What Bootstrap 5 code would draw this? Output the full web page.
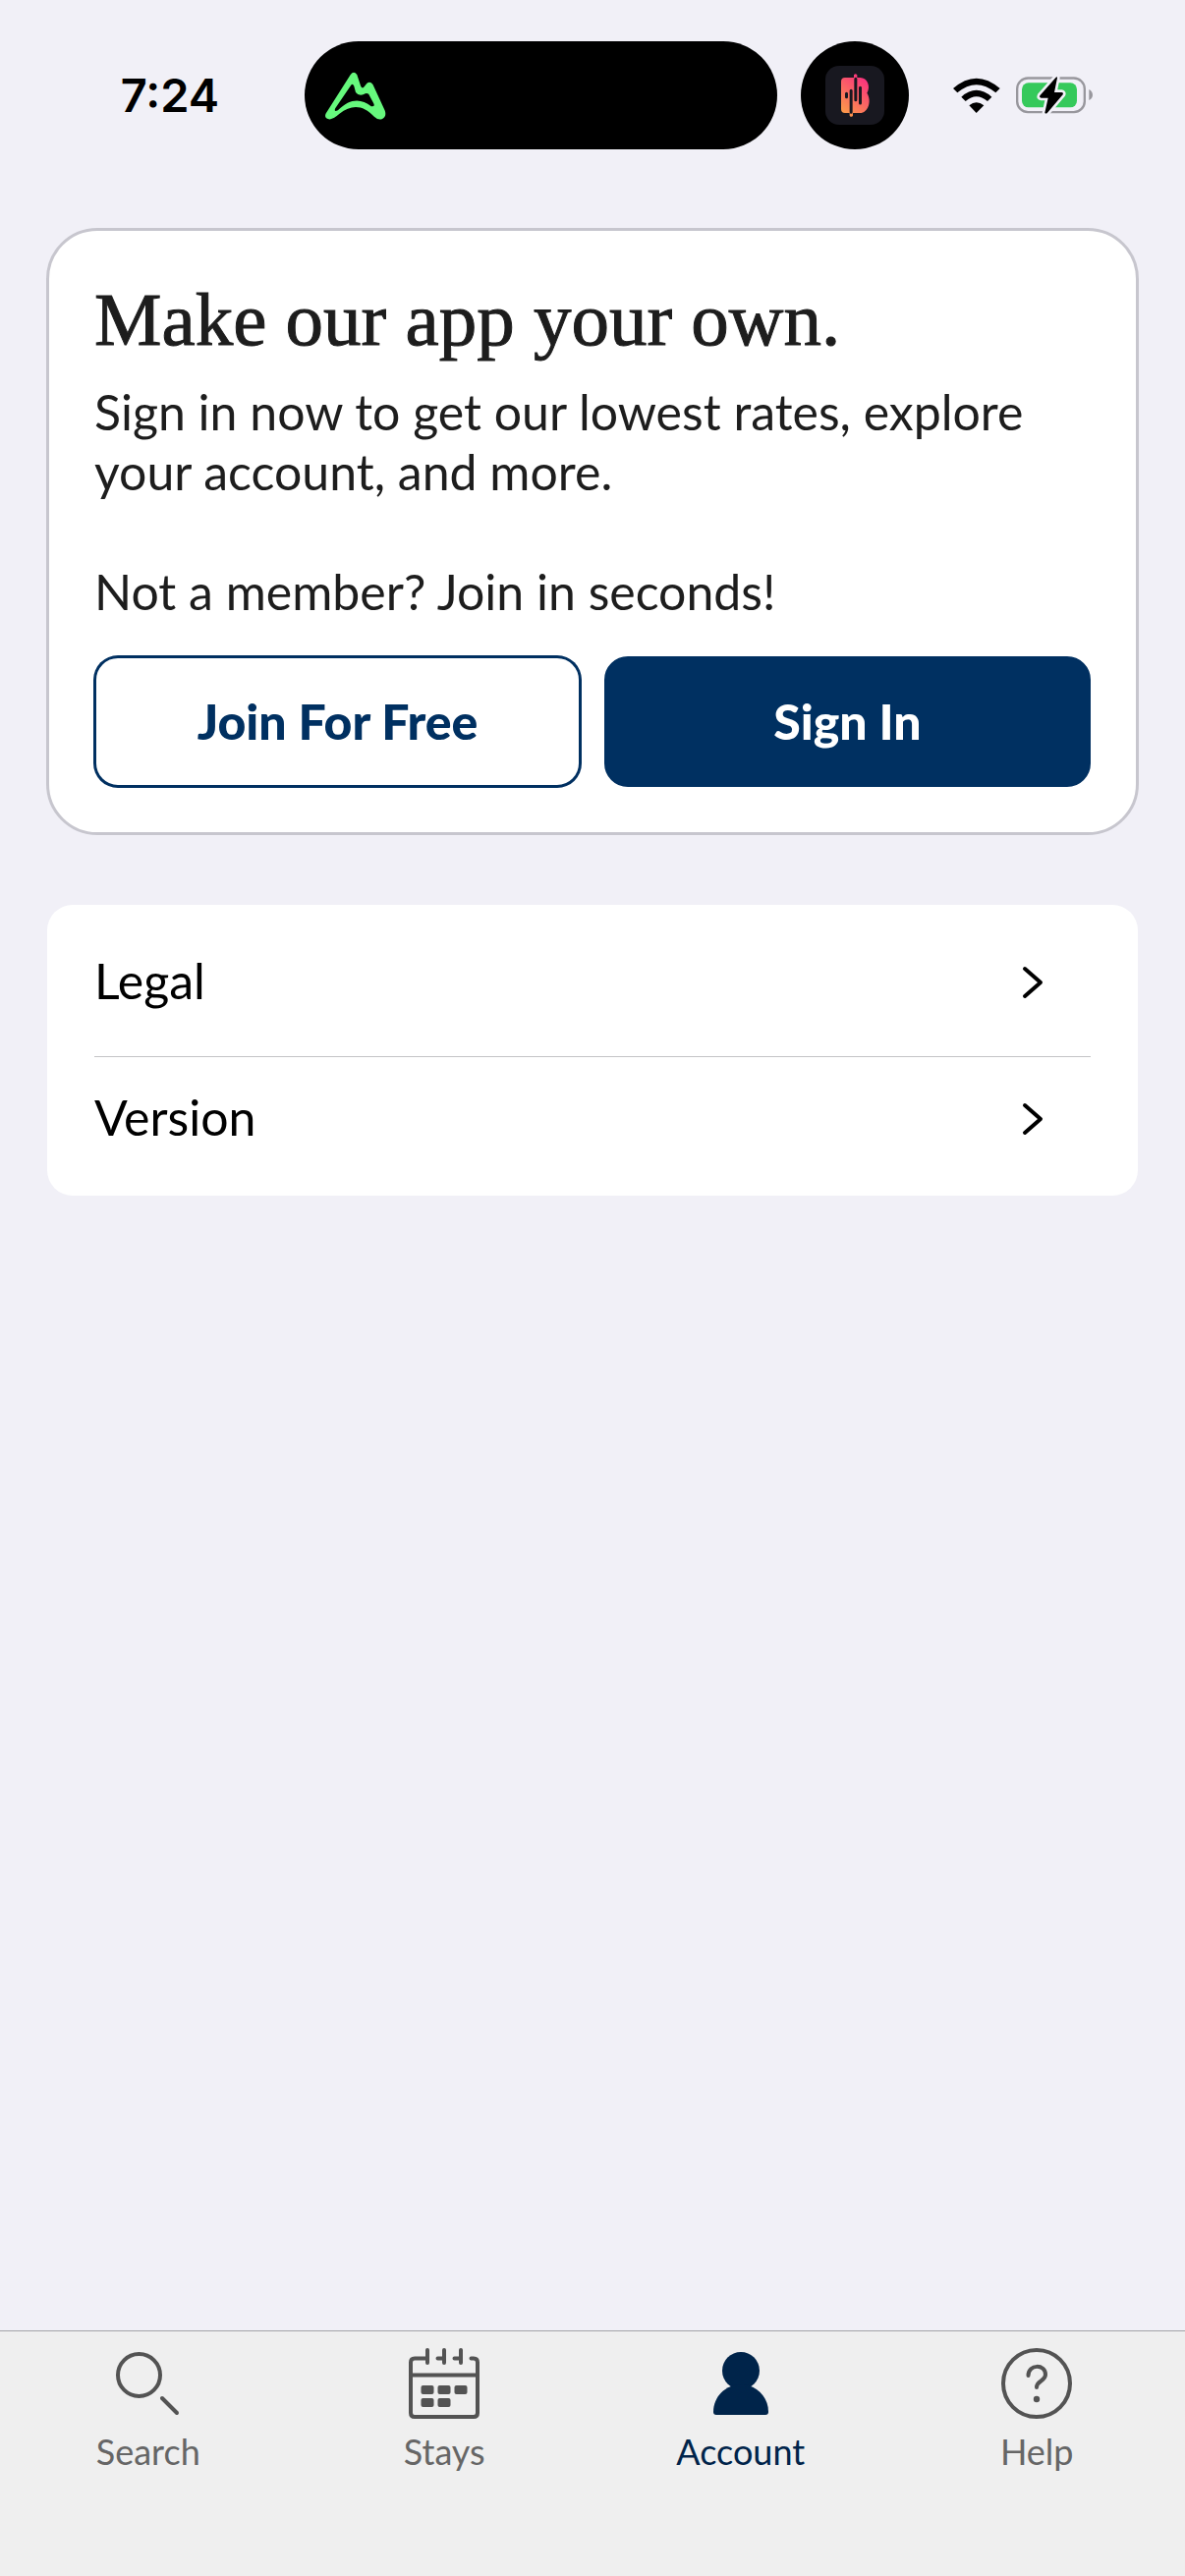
<!DOCTYPE html>
<html lang="en">
<head>
<meta charset="utf-8">
<meta name="viewport" content="width=device-width, initial-scale=1">
<title>Account</title>
<link href="https://cdn.jsdelivr.net/npm/bootstrap@5.3.0/dist/css/bootstrap.min.css" rel="stylesheet">
<style>
:root { --navy: #003061; --ink: #1d1d1d; }
body { background: #f1f0f7; color: var(--ink); font-family: Lato, "Open Sans", sans-serif; font-size: 50px; line-height: 61px; }
svg { display: block; flex: none; }
.status-bar { padding: 42px 94px 0 36px; height: 152px; }
.clock { font: 600 47px/56px Inter, sans-serif; color: #000; }
.island { width: 481px; height: 110px; padding-left: 21px; background: #000; }
.island-dot { width: 110px; height: 110px; background: #000; margin: 0 45px 0 24px; }
.page-main { padding: 80px 47px 0; }
.join-card { border: 3px solid #c7c6ce; border-radius: 52px; padding: 46px; }
.join-card h1 { font: 400 77px/88px "Liberation Serif", serif; -webkit-text-stroke: 1px currentColor; margin: 0 0 20px; }
.join-card .intro { max-width: 980px; margin-bottom: 61px; }
.join-card .prompt { margin-bottom: 35px; }
.action-btn { height: 133px; border-radius: 24px; font-size: 50px; font-weight: 900; border: 2px solid var(--navy); color: var(--navy); }
.action-btn.outlined { background: #fff; box-shadow: 0 0 0 1px var(--navy); }
.action-btn.filled { background: var(--navy); color: #fff; }
.link-card { margin: 71px 1px 0; padding: 4px 48px 15px; border-radius: 26px; }
.link-row { color: #000; height: 126px; padding-right: 48px; }
.link-row:first-child { height: 151px; border-bottom: 1px solid #c4c4c6; }
.link-row span { padding-bottom: 4px; }
.tab-bar { height: 250px; background: #efefef; border-top: 1px solid #a3a3a8; padding-top: 17px; font-size: 36px; line-height: 40px; }
.tab-item { color: #666; gap: 13px; }
.tab-item svg { color: #535353; }
.tab-item.active, .tab-item.active svg { color: #00244a; }
</style>
<script src="https://cdn.jsdelivr.net/npm/bootstrap@5.3.0/dist/js/bootstrap.bundle.min.js"></script>
</head>
<body>
<div class="d-flex flex-column min-vh-100">
  <header class="status-bar d-flex align-items-center">
    <div class="clock flex-fill text-center">7:24</div>
    <div class="island rounded-pill d-flex align-items-center">
      <svg width="62" height="49" viewBox="723 127 188 147" aria-hidden="true">
        <path fill="#66f87d" fill-rule="evenodd" d="M725 255 L801 135 Q811 122 821 135 L833 172 Q838 181 844 172 Q858 149 870 166 L907 246 Q914 267 896 273 Q884 275 874 265 C840 229 805 226 767 256 Q750 271 737 273 Q718 271 725 255 Z M803 167 L754 239 Q749 252 762 245 C800 208 833 208 865 233 Q878 235 872 223 L857 195 Q850 190 842 196 Q826 202 817 190 L812 171 Q808 162 803 167 Z"/>
      </svg>
    </div>
    <div class="island-dot rounded-circle d-flex align-items-center justify-content-center">
      <svg width="60" height="60" viewBox="180 111 180 180" aria-hidden="true">
        <defs><linearGradient id="warm" x1="0.75" y1="0" x2="0.2" y2="1"><stop offset="0" stop-color="#f82d80"/><stop offset="1" stop-color="#fc9c48"/></linearGradient></defs>
        <rect x="180" y="111" width="180" height="180" rx="42" fill="#181820"/>
        <path fill="url(#warm)" d="M240 147H267V139Q272 132 277 139V147H286C309 147 319 175 307 194C323 219 310 255 286 255H264V263Q259 270 254 263V255H240Q228 255 228 243V159Q228 147 240 147Z"/>
        <path d="M244.500 196v10M258.500 187v66M272.500 151v64M286.500 178v47" stroke="#181820" stroke-width="9" stroke-linecap="round"/>
      </svg>
    </div>
    <svg class="me-3" width="48" height="36" viewBox="569 148 144 108" role="img" aria-label="Wi-Fi">
      <path d="M569 181Q640 119 712 181L699 194Q640 145 582 194Z M594 207Q640 166 687 207L674 220Q640 191 607 220Z M618 233Q640 215 663 233L640 256Z"/>
    </svg>
    <svg width="78" height="40" viewBox="762 143 234 120" role="img" aria-label="Battery charging">
      <rect x="765.500" y="150.500" width="206" height="104" rx="33" fill="none" stroke="#98979d" stroke-width="7"/>
      <path d="M985 185Q996 191 996 202Q996 212 985 218Z" fill="#98979d"/>
      <rect x="780" y="165" width="168" height="75" rx="20" fill="#35c95b"/>
      <path d="M884 148L835 204Q832 210 839 211H860L850 256Q853 261 858 256L905 201Q908 195 901 194H879L888 150Q888 145 884 148Z" stroke="#f1f0f7" stroke-width="16" paint-order="stroke"/>
    </svg>
  </header>

  <main class="page-main flex-grow-1">
    <section class="join-card bg-white">
      <h1>Make our app your own.</h1>
      <p class="intro">Sign in now to get our lowest rates, explore your account, and more.</p>
      <p class="prompt">Not a member? Join in seconds!</p>
      <div class="d-flex gap-4">
        <button type="button" class="btn action-btn outlined w-100">Join For Free</button>
        <button type="button" class="btn action-btn filled w-100">Sign In</button>
      </div>
    </section>
    <nav class="link-card bg-white" aria-label="About">
      <a href="#legal" class="link-row d-flex align-items-center justify-content-between text-decoration-none"><span>Legal</span>
        <svg width="22" height="34" viewBox="0 0 22 34" fill="none" stroke="currentColor" stroke-width="4" stroke-linecap="round" stroke-linejoin="round" aria-hidden="true"><path d="M3 3L19 17L3 31"/></svg>
      </a>
      <a href="#version" class="link-row d-flex align-items-center justify-content-between text-decoration-none"><span>Version</span>
        <svg width="22" height="34" viewBox="0 0 22 34" fill="none" stroke="currentColor" stroke-width="4" stroke-linecap="round" stroke-linejoin="round" aria-hidden="true"><path d="M3 3L19 17L3 31"/></svg>
      </a>
    </nav>
  </main>

  <nav class="tab-bar row g-0" aria-label="Main">
    <a href="#search" class="tab-item col d-flex flex-column align-items-center text-decoration-none">
      <svg width="72" height="72" viewBox="0 0 72 72" fill="none" stroke="currentColor" stroke-width="4" stroke-linecap="round" aria-hidden="true"><circle cx="26.500" cy="27.500" r="21.500"/><path d="M50 51L65 66"/></svg>
      Search
    </a>
    <a href="#stays" class="tab-item col d-flex flex-column align-items-center text-decoration-none">
      <svg width="72" height="72" viewBox="0 0 72 72" fill="none" stroke="currentColor" stroke-width="4" stroke-linecap="round" aria-hidden="true"><path d="M19 10.500H6Q2 10.500 2 14.500V66Q2 70 6 70H66Q70 70 70 66V14.500Q70 10.500 66 10.500H63.500M2 27.500H70M19 2V15M36 2V15M53 2V15M29.500 10.500H36M46.500 10.500H53"/><g fill="currentColor" stroke="none"><rect x="12.500" y="38" width="13" height="9" rx="2"/><rect x="29.500" y="38" width="13" height="9" rx="2"/><rect x="46.500" y="38" width="13" height="9" rx="2"/><rect x="12.500" y="51" width="13" height="9" rx="2"/><rect x="29.500" y="51" width="13" height="9" rx="2"/></g></svg>
      Stays
    </a>
    <a href="#account" class="tab-item active col d-flex flex-column align-items-center text-decoration-none" aria-current="page">
      <svg width="72" height="72" viewBox="0 0 72 72" fill="currentColor" aria-hidden="true"><circle cx="36" cy="23" r="19"/><path d="M36 37C51 37 64 49 64 65Q64 68 61 68H11Q8 68 8 65C8 49 21 37 36 37Z"/></svg>
      Account
    </a>
    <a href="#help" class="tab-item col d-flex flex-column align-items-center text-decoration-none">
      <svg width="72" height="72" viewBox="0 0 72 72" fill="none" stroke="currentColor" stroke-width="4" stroke-linecap="round" aria-hidden="true"><circle cx="36" cy="36" r="34"/><path d="M27.500 28C27.500 16 45 16 45 27C45 34 36 33 36 40"/><circle cx="36" cy="52" r="3.200" fill="currentColor" stroke="none"/></svg>
      Help
    </a>
  </nav>
</div>
</body>
</html>
